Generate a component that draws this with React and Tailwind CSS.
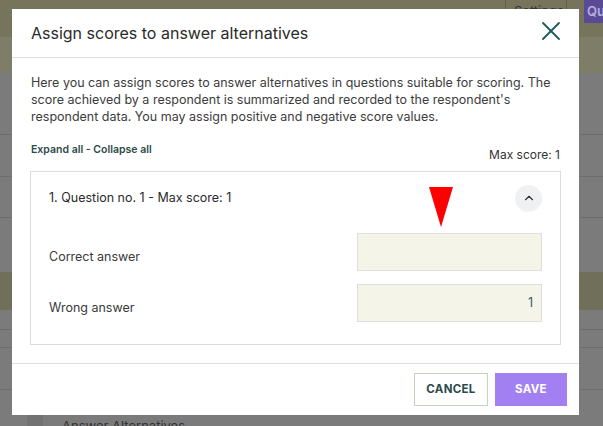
import { X, ChevronUp } from "lucide-react";

export default function App() {
  return (
    <div
      className="relative w-[603px] h-[426px] overflow-hidden bg-[#7b7b7b]"
      style={{ fontFamily: "Inter, 'Noto Sans', sans-serif" }}
    >
      {/* page behind the overlay */}
      <div className="flex flex-col">
        <div className="h-[37px] bg-[#76755b] flex justify-end items-start">
          <div className="h-[23px] w-[62px] pl-[8px] border-l border-r border-[#5f5e4a] text-[13px] text-[#333] leading-[22px] overflow-hidden">Settings</div>
          <div className="h-[23px] w-[17px] pl-[4px] text-[#333] text-[13px] leading-[22px]">›</div>
          <div className="h-[23px] w-[19px] pl-[3px] bg-[#5a4a96] text-[#b7aee0] text-[13px] font-semibold leading-[22px] overflow-hidden">Qu</div>
        </div>
        <div className="h-[36px] bg-[#7e7d67]" />
        <div className="h-[62px] border-b border-[#6e6e6e]" />
        <div className="h-[42px] border-b border-[#6e6e6e]" />
        <div className="h-[41px] border-b border-[#6e6e6e]" />
        <div className="h-[54px]" />
        <div className="h-[38px] bg-[#706f59]" />
        <div className="h-[20px] border-b border-[#6e6e6e]" />
        <div className="h-[18px] border-b border-[#6e6e6e]" />
        <div className="h-[42px] border-b border-[#6e6e6e]" />
        <div className="flex h-[40px]">
          <div className="w-[27px]" />
          <div className="w-[16px] bg-[#727272]" />
          <div className="pl-[19px] pt-[27px] text-[13px] text-[#333] whitespace-nowrap">Answer Alternatives</div>
        </div>
      </div>

      {/* modal */}
      <div className="absolute left-[12px] top-[9px] w-[567px] h-[406px] bg-white flex flex-col">
        <div className="h-[49px] border-b border-[#dedede] flex items-center justify-between pl-[19px] pr-[12px]">
          <h2 className="text-[16px] text-[#2a2a2a]">Assign scores to answer alternatives</h2>
          <X size={32} strokeWidth={1.35} className="text-[#1d5a5a] -mt-[4px]" />
        </div>

        <div className="px-[18px] pt-[16px]">
          <p className="pl-[1px] text-[12.5px] leading-[17px] text-[#3c3c3c]">
            Here you can assign scores to answer alternatives in questions suitable for scoring. The score achieved by a respondent is summarized and recorded to the respondent's respondent data. You may assign positive and negative score values.
          </p>
          <div className="mt-[17px] pl-[1px] flex justify-between items-start">
            <div className="text-[10.5px] font-semibold text-[#2c4a4a]">Expand all - Collapse all</div>
            <div className="pt-[4px] pr-[1px] text-[12px] text-[#333]">Max score: 1</div>
          </div>

          <div className="mt-[7px] border border-[#dcdcdc] h-[174px] px-[18px]">
            <div className="h-[52px] flex items-center justify-between">
              <div className="text-[12.5px] text-[#2a2a2a]">1. Question no. 1 - Max score: 1</div>
              <div className="w-[27px] h-[27px] rounded-full bg-[#f0f1f3] flex items-center justify-center">
                <ChevronUp size={14} strokeWidth={2} className="text-[#333]" />
              </div>
            </div>
            <div className="mt-[9px] flex items-center justify-between h-[38px]">
              <span className="pt-[11px] text-[12.5px] text-[#3a3a3a]">Correct answer</span>
              <div className="w-[185px] h-[38px] bg-[#f4f4e8] border border-[#dedede]" />
            </div>
            <div className="mt-[13px] flex items-center justify-between h-[38px]">
              <span className="pt-[11px] text-[12.5px] text-[#3a3a3a]">Wrong answer</span>
              <div className="w-[185px] h-[38px] bg-[#f4f4e8] border border-[#dedede] flex items-center justify-end pr-[8px] text-[12.5px] text-[#2b5f6a]">1</div>
            </div>
          </div>
        </div>

        <div className="mt-[18px] border-t border-[#dedede] flex justify-end gap-[7px] pt-[9px] pr-[12px]">
          <button className="w-[74px] h-[33px] border border-[#c5d5bd] text-[11.5px] font-bold tracking-wide text-[#2c4a4a]">CANCEL</button>
          <button className="w-[72px] h-[33px] bg-[#a280f1] text-[11.5px] font-bold tracking-wide text-white">SAVE</button>
        </div>
      </div>

      {/* red marker */}
      <svg className="absolute left-[429px] top-[187px]" width="24" height="40" viewBox="0 0 24 40">
        <polygon points="0,0 24,0 12,40" fill="#ff0000" />
      </svg>
    </div>
  );
}
